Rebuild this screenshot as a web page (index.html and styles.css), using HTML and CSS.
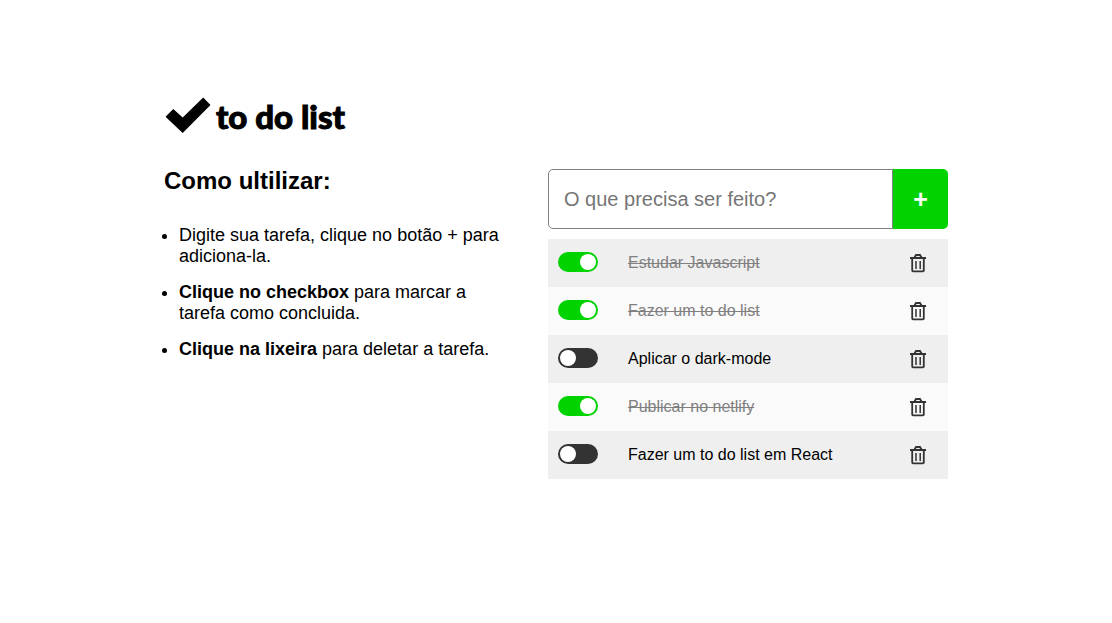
FILE: index.html
```html
<!DOCTYPE html>
<html lang="pt-BR">
<head>
<meta charset="utf-8">
<title>to do list</title>
<meta name="viewport" content="width=device-width, initial-scale=1">
<link rel="stylesheet" href="styles.css">
</head>
<body>
<svg class="sprite" aria-hidden="true">
  <symbol id="trash" viewBox="0 0 16 20">
    <path d="M0 5h16M4.500 4.500 6 2h4l1.500 2.500M2.200 5v12.500q0 .8.8.8h10q.8 0 .8-.8V5" fill="none" stroke="currentColor" stroke-width="1.800"/>
    <path d="M6 8v8M10.200 8v8" fill="none" stroke="currentColor" stroke-width="1.500"/>
  </symbol>
</svg>
<div class="page">
  <header class="logo">
    <svg class="logo-mark" viewBox="0 0 48 38" aria-hidden="true"><path d="M1.500 20.700 9.300 13 18.700 21.500 39.200 1.500 46.500 9 18.700 37z"/></svg>
    <h1 class="logo-name">to do list</h1>
  </header>
  <main class="columns">
    <section class="help">
      <h2 class="help-title">Como ultilizar:</h2>
      <ul class="help-list">
        <li>Digite sua tarefa, clique no botão + para adiciona-la.</li>
        <li><strong>Clique no checkbox</strong> para marcar a tarefa como concluida.</li>
        <li><strong>Clique na lixeira</strong> para deletar a tarefa.</li>
      </ul>
    </section>
    <section class="todo">
      <form class="new-task">
        <input class="new-task-input" type="text" placeholder="O que precisa ser feito?" aria-label="Nova tarefa">
        <button class="new-task-add" type="button" aria-label="Adicionar">+</button>
      </form>
      <ul class="tasks">
        <li class="task"><input class="switch" type="checkbox" id="t1" checked><label class="task-name" for="t1">Estudar Javascript</label><button class="delete" type="button" aria-label="Deletar"><svg class="trash"><use href="#trash"/></svg></button></li>
        <li class="task"><input class="switch" type="checkbox" id="t2" checked><label class="task-name" for="t2">Fazer um to do list</label><button class="delete" type="button" aria-label="Deletar"><svg class="trash"><use href="#trash"/></svg></button></li>
        <li class="task"><input class="switch" type="checkbox" id="t3"><label class="task-name" for="t3">Aplicar o dark-mode</label><button class="delete" type="button" aria-label="Deletar"><svg class="trash"><use href="#trash"/></svg></button></li>
        <li class="task"><input class="switch" type="checkbox" id="t4" checked><label class="task-name" for="t4">Publicar no netlify</label><button class="delete" type="button" aria-label="Deletar"><svg class="trash"><use href="#trash"/></svg></button></li>
        <li class="task"><input class="switch" type="checkbox" id="t5"><label class="task-name" for="t5">Fazer um to do list em React</label><button class="delete" type="button" aria-label="Deletar"><svg class="trash"><use href="#trash"/></svg></button></li>
      </ul>
    </section>
  </main>
</div>
</body>
</html>
```
FILE: styles.css
```css
* {
  box-sizing: border-box;
  margin: 0;
  padding: 0;
}

body {
  background: #fff;
  color: #000;
  font-family: "Liberation Sans", Arial, sans-serif;
}

.sprite {
  display: none;
}

.page {
  max-width: 824px;
  margin: 0 auto;
  padding: 96px 20px 40px;
}

.logo {
  display: flex;
  align-items: center;
  gap: 4px;
  margin-bottom: 35px;
}

.logo-mark {
  width: 48px;
  height: 38px;
}

.logo-name {
  padding-top: 2px;
  font: 900 33px/36px Lato, sans-serif;
  -webkit-text-stroke: 1px #000;
}

.columns {
  display: grid;
  grid-template-columns: 1fr;
  gap: 40px;
}

@media (min-width: 760px) {
  .columns {
    grid-template-columns: 1fr 400px;
  }
}

.help-title {
  margin-bottom: 32px;
  font-size: 24px;
  line-height: 24px;
}

.help-list {
  display: grid;
  gap: 15px;
  padding-left: 15px;
  font-size: 18px;
  line-height: 21px;
}

.new-task {
  display: flex;
  height: 60px;
  margin-bottom: 10px;
}

.new-task-input {
  flex: 1;
  min-width: 0;
  padding: 0 15px;
  border: 1px solid #808080;
  border-radius: 5px 0 0 5px;
  background: #fff;
  font: 20px "Liberation Sans", Arial, sans-serif;
}

.new-task-input::placeholder {
  color: #757575;
}

.new-task-add {
  width: 55px;
  border: 0;
  border-radius: 0 5px 5px 0;
  background: #00d300;
  color: #fff;
  font: bold 25px "Liberation Sans", Arial, sans-serif;
}

.tasks {
  list-style: none;
}

.task {
  display: flex;
  align-items: center;
  height: 48px;
  padding: 0 20px 0 10px;
  background: #fafafa;
}

.task:nth-child(odd) {
  background: #efefef;
}

.switch {
  appearance: none;
  display: flex;
  width: 40px;
  height: 20px;
  margin: 0 30px 2px 0;
  padding: 2px;
  border-radius: 10px;
  background: #333;
}

.switch::before {
  content: "";
  width: 16px;
  height: 16px;
  border-radius: 50%;
  background: #fff;
}

.switch:checked {
  justify-content: flex-end;
  background: #00d300;
}

.task-name {
  flex: 1;
  font-size: 16px;
}

.switch:checked + .task-name {
  color: #808080;
  text-decoration: line-through;
}

.delete {
  display: flex;
  border: 0;
  background: none;
  color: #333;
}

.new-task-add,
.switch,
.delete {
  cursor: pointer;
}

.trash {
  width: 20px;
  height: 20px;
}
```
